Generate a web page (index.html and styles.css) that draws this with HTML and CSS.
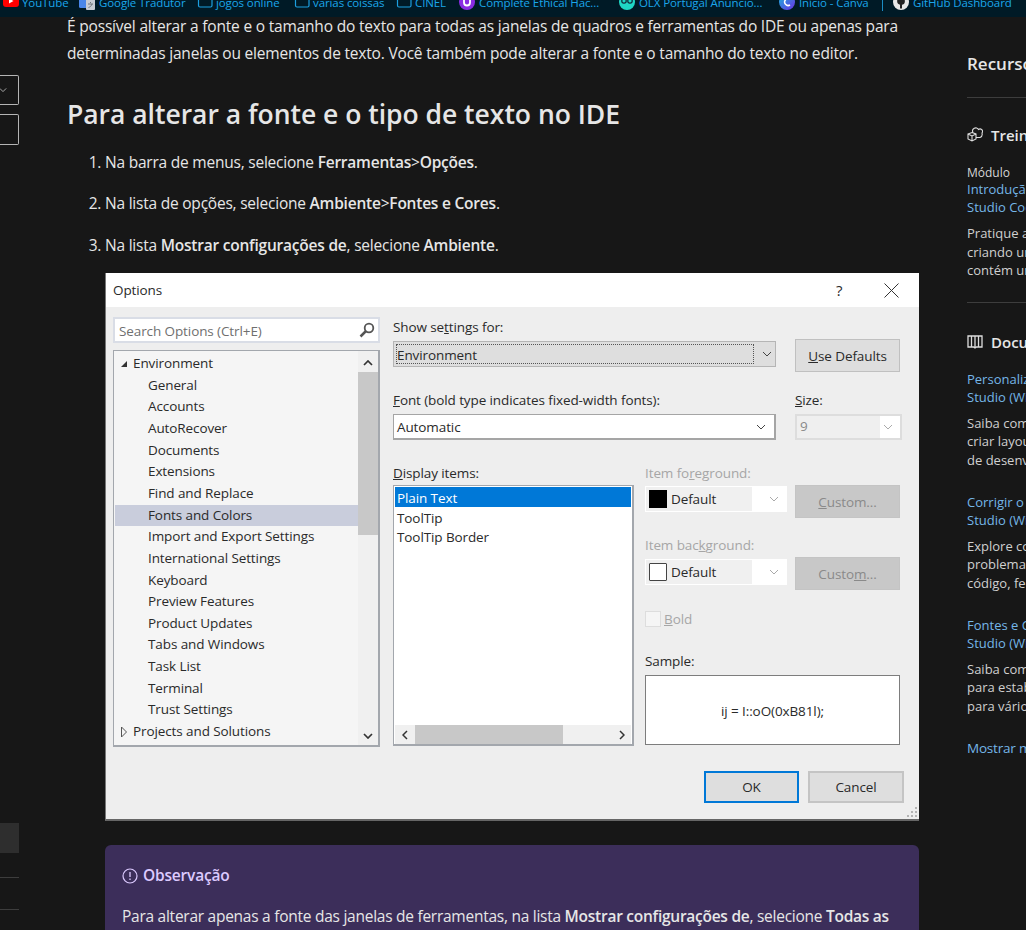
FILE: index.html
```html
<!DOCTYPE html>
<html lang="pt">
<head>
<meta charset="utf-8">
<title>Fontes e Cores</title>
<link rel="stylesheet" href="styles.css">
</head>
<body>
<svg class="defs" width="0" height="0" aria-hidden="true">
  <symbol id="chev" viewBox="0 0 10 6"><path d="M1 1l4 4 4-4" fill="none" stroke="currentColor" stroke-width="1"/></symbol>
  <symbol id="folder" viewBox="0 0 16 16"><path d="M1.500 4a1.500 1.500 0 0 1 1.500-1.500h3l1.500 1.500h6a1.500 1.500 0 0 1 1.500 1.500v6a1.500 1.500 0 0 1-1.500 1.500H3a1.500 1.500 0 0 1-1.500-1.500z" fill="none" stroke="#1b9fe0" stroke-width="1.200"/></symbol>
</svg>

<nav class="bookmarks">
  <a class="bm bm-yt"><svg class="fav" viewBox="0 0 16 16"><rect x="0" y="1" width="16" height="12" rx="3" fill="#f00"/><path d="M6 4.500v5l4.500-2.500z" fill="#fff"/></svg>YouTube</a>
  <a class="bm bm-gt"><svg class="fav" viewBox="0 0 16 16"><rect x="0" y="2" width="11" height="12" rx="1.500" fill="#4a86e8"/><rect x="7" y="5" width="9" height="11" rx="1" fill="#c9ccd2"/><path d="M9 10h5M11.500 8v1M13 10c-.5 2-2 3-3.500 3.500" stroke="#70757a" fill="none"/></svg>Google Tradutor</a>
  <a class="bm bm-f1"><svg class="fav"><use href="#folder"/></svg>jogos online</a>
  <a class="bm bm-f2"><svg class="fav"><use href="#folder"/></svg>varias coissas</a>
  <a class="bm bm-f3"><svg class="fav"><use href="#folder"/></svg>CINEL</a>
  <a class="bm bm-ud"><svg class="fav" viewBox="0 0 16 16"><circle cx="8" cy="8" r="8" fill="#8a2be2"/><path d="M5 4.500v4a3 3 0 0 0 6 0v-4" fill="none" stroke="#fff" stroke-width="1.800"/></svg>Complete Ethical Hac...</a>
  <a class="bm bm-ol"><svg class="fav" viewBox="0 0 16 16"><circle cx="8" cy="8" r="8" fill="#1fd6c4"/><circle cx="5" cy="7" r="2.200" fill="none" stroke="#123" stroke-width="1.200"/><circle cx="11" cy="7" r="2.200" fill="none" stroke="#123" stroke-width="1.200"/></svg>OLX Portugal Anuncio...</a>
  <a class="bm bm-ca"><svg class="fav" viewBox="0 0 16 16"><defs><linearGradient id="cg" x1="0" y1="0" x2="1" y2="1"><stop offset="0" stop-color="#18b7d8"/><stop offset="1" stop-color="#6d2ee8"/></linearGradient></defs><circle cx="8" cy="8" r="8" fill="url(#cg)"/><path d="M11 5a3.500 3.500 0 1 0 0 6" fill="none" stroke="#fff" stroke-width="1.500"/></svg>Início - Canva</a>
  <span class="bm-sep"></span>
  <a class="bm bm-gh"><svg class="fav" viewBox="0 0 16 16"><circle cx="8" cy="8" r="8" fill="#e8e8e8"/><path d="M4.500 3.500l2 1h3l2-1 .3 3c.5 3-1.500 4-2.800 4.200v3.800H7v-3.800C5.500 10.500 3.800 9.500 4.200 6.500z" fill="#222"/></svg>GitHub Dashboard</a>
</nav>

<div class="page">
  <aside class="leftnav">
    <div class="select-stub"><svg class="stub-chev"><use href="#chev"/></svg></div>
    <div class="input-stub"></div>
    <div class="active-stub"></div>
    <div class="rule-a"></div>
    <div class="rule-b"></div>
  </aside>

  <main class="article">
    <p class="intro">É possível alterar a fonte e o tamanho do texto para todas as janelas de quadros e ferramentas do IDE ou apenas para determinadas janelas ou elementos de texto. Você também pode alterar a fonte e o tamanho do texto no editor.</p>
    <h2 class="heading">Para alterar a fonte e o tipo de texto no IDE</h2>
    <ol class="steps">
      <li>Na barra de menus, selecione <b>Ferramentas</b>&gt;<b>Opções</b>.</li>
      <li>Na lista de opções, selecione <b>Ambiente</b>&gt;<b>Fontes e Cores</b>.</li>
      <li>Na lista <b>Mostrar configurações de</b>, selecione <b>Ambiente</b>.</li>
    </ol>

    <section class="dialog">
      <header class="dlg-title">
        <span class="dlg-name">Options</span>
        <span class="dlg-help">?</span>
        <svg class="dlg-close" viewBox="0 0 15 15"><path d="M.5.500l14 14M14.500.500l-14 14" stroke="#333" fill="none"/></svg>
      </header>
      <div class="dlg-body">
        <div class="dlg-left">
          <div class="search">
            <span class="search-ph">Search Options (Ctrl+E)</span>
            <svg class="search-ico" viewBox="0 0 16 16"><circle cx="10" cy="6" r="4.300" fill="none" stroke="#555" stroke-width="1.800"/><path d="M7 9l-5.500 5.500" stroke="#555" stroke-width="2.500"/></svg>
          </div>
          <div class="tree">
            <ul class="tree-list">
              <li class="node"><svg class="tri" viewBox="0 0 8 12"><path d="M7 3v6H1z" fill="#333"/></svg>Environment</li>
              <li>General</li>
              <li>Accounts</li>
              <li>AutoRecover</li>
              <li>Documents</li>
              <li>Extensions</li>
              <li>Find and Replace</li>
              <li class="sel">Fonts and Colors</li>
              <li>Import and Export Settings</li>
              <li>International Settings</li>
              <li>Keyboard</li>
              <li>Preview Features</li>
              <li>Product Updates</li>
              <li>Tabs and Windows</li>
              <li>Task List</li>
              <li>Terminal</li>
              <li>Trust Settings</li>
              <li class="node"><svg class="tri" viewBox="0 0 8 12"><path d="M1.500 1l5 5-5 5z" fill="none" stroke="#555"/></svg>Projects and Solutions</li>
            </ul>
            <div class="vscroll">
              <svg class="arrow-v" viewBox="0 0 10 6"><path d="M1 5l4-4 4 4" fill="none" stroke="#333" stroke-width="1.700"/></svg>
              <div class="vthumb"></div>
              <svg class="arrow-v arrow-down" viewBox="0 0 10 6"><path d="M1 1l4 4 4-4" fill="none" stroke="#333" stroke-width="1.700"/></svg>
            </div>
          </div>
        </div>

        <div class="dlg-right">
          <div class="row-show">
            <div class="col-main">
              <label class="lbl">Show se<u>t</u>tings for:</label>
              <div class="combo combo-env"><span class="focus-box">Environment</span><svg class="chev"><use href="#chev"/></svg></div>
            </div>
            <button class="btn btn-defaults"><u>U</u>se Defaults</button>
          </div>
          <div class="row-font">
            <div class="col-main">
              <label class="lbl"><u>F</u>ont (bold type indicates fixed-width fonts):</label>
              <div class="combo combo-font"><span class="combo-text">Automatic</span><svg class="chev"><use href="#chev"/></svg></div>
            </div>
            <div class="col-size">
              <label class="lbl"><u>S</u>ize:</label>
              <div class="combo combo-size"><span class="size-val">9</span><svg class="chev"><use href="#chev"/></svg></div>
            </div>
          </div>
          <div class="row-items">
            <div class="col-list">
              <label class="lbl"><u>D</u>isplay items:</label>
              <div class="listbox">
                <ul class="items">
                  <li class="item-sel">Plain Text</li>
                  <li>ToolTip</li>
                  <li>ToolTip Border</li>
                </ul>
                <div class="hscroll">
                  <svg class="arrow-h" viewBox="0 0 6 10"><path d="M5 1L1 5l4 4" fill="none" stroke="#333" stroke-width="1.500"/></svg>
                  <div class="hthumb"></div>
                  <svg class="arrow-h arrow-r" viewBox="0 0 6 10"><path d="M1 1l4 4-4 4" fill="none" stroke="#333" stroke-width="1.500"/></svg>
                </div>
              </div>
            </div>
            <div class="col-opts">
              <div class="opt-row">
                <div class="opt-col">
                  <label class="lbl lbl-off">Item fo<u>r</u>eground:</label>
                  <div class="color-combo"><span class="swatch swatch-black"></span><span class="color-name">Default</span><svg class="chev"><use href="#chev"/></svg></div>
                </div>
                <button class="btn btn-custom"><u>C</u>ustom...</button>
              </div>
              <div class="opt-row opt-row-bg">
                <div class="opt-col">
                  <label class="lbl lbl-off">Item bac<u>k</u>ground:</label>
                  <div class="color-combo color-combo-bg"><span class="swatch swatch-white"></span><span class="color-name">Default</span><svg class="chev"><use href="#chev"/></svg></div>
                </div>
                <button class="btn btn-custom">Custo<u>m</u>...</button>
              </div>
              <div class="bold-row"><span class="check"></span><span class="lbl-off"><u>B</u>old</span></div>
              <label class="lbl lbl-sample">Sample:</label>
              <div class="sample">ij = I::oO(0xB81l);</div>
            </div>
          </div>
          <div class="row-actions">
            <button class="btn btn-ok">OK</button>
            <button class="btn btn-cancel">Cancel</button>
          </div>
        </div>
      </div>
      <svg class="grip" viewBox="0 0 12 12"><path d="M10 1h2v2h-2zM10 5h2v2h-2zM6 5h2v2H6zM10 9h2v2h-2zM6 9h2v2H6zM2 9h2v2H2z" fill="#b4b4b4"/></svg>
    </section>

    <aside class="note">
      <p class="note-title"><svg class="note-ico" viewBox="0 0 16 16"><circle cx="8" cy="8" r="7" fill="none" stroke="currentColor" stroke-width="1.200"/><path d="M8 4v5M8 10.500v1.500" stroke="currentColor" stroke-width="1.300"/></svg>Observação</p>
      <p class="note-text">Para alterar apenas a fonte das janelas de ferramentas, na lista <b>Mostrar configurações de</b>, selecione <b>Todas as</b></p>
    </aside>
  </main>

  <aside class="side">
    <h2 class="side-title">Recursos</h2>
    <section class="side-sec">
      <h3 class="side-head"><svg class="side-ico" viewBox="0 0 16 16"><path d="M1 7l4-1.500L9 7v5l-4 2-4-2zM1 7l4 2 4-2M5 9v5M6 5.500a3 3 0 0 1 5.500-3 2.500 2.500 0 0 1 3.500 3.500c.5 2-.5 4-2 4.500H9" fill="none" stroke="#ddd" stroke-width="1.100"/></svg>Treinamento</h3>
      <p class="side-kind">Módulo</p>
      <a class="side-link">Introdução<br>Studio Code</a>
      <p class="side-desc">Pratique a<br>criando um<br>contém um</p>
    </section>
    <section class="side-sec side-docs">
      <h3 class="side-head"><svg class="side-ico" viewBox="0 0 16 16"><path d="M1 2h14v11H9.500L8 14l-1.500-1H1zM4.500 2v11M8 2v12M11.500 2v11" fill="none" stroke="#ddd" stroke-width="1.300"/></svg>Documentação</h3>
      <a class="side-link side-link-first">Personalizar<br>Studio (Windows)</a>
      <p class="side-desc">Saiba como<br>criar layouts<br>de desenvolvimento</p>
      <a class="side-link side-link-next">Corrigir o<br>Studio (Windows)</a>
      <p class="side-desc">Explore como<br>problemas<br>código, fe</p>
      <a class="side-link side-link-next">Fontes e Cores<br>Studio (Windows)</a>
      <p class="side-desc">Saiba como<br>para estabelecer<br>para vários</p>
      <a class="side-link side-link-next side-more">Mostrar mais</a>
    </section>
  </aside>
</div>
</body>
</html>
```

FILE: styles.css
```css
* { box-sizing: border-box; }
html, body { margin: 0; padding: 0; height: 930px; overflow: hidden; }
body { width: 1026px; background: #171717; color: #e6e6e6; font-family: "Open Sans", "Noto Sans", sans-serif; font-size: 15.5px; position: relative; }
p, h2, h3, ul, ol { margin: 0; padding: 0; }
ul { list-style: none; }
.defs { position: absolute; }

/* Bookmark bar */
.bookmarks { height: 17px; background: #001a26; display: flex; align-items: flex-end; padding: 0 0 6px 0; overflow: hidden; position: relative; z-index: 2; white-space: nowrap; }
.bm { display: flex; align-items: center; flex: none; height: 16px; font-size: 11.500px; letter-spacing: -0.1px; color: #1ba6ea; line-height: 16px; }
.fav { width: 16px; height: 16px; flex: none; margin: 0 4px 2px 0; }
.bm-yt { margin-left: 3px; width: 76px; }
.bm-yt .fav { margin-right: 3px; }
.bm-gt { width: 118px; }
.bm-f1 { width: 97px; }
.bm-f1 .fav, .bm-f2 .fav, .bm-f3 .fav { margin-right: 3px; }
.bm-f2 { width: 102px; }
.bm-f3 { width: 63px; }
.bm-ud { width: 160px; }
.bm-ol { width: 160px; }
.bm-ca { width: 103px; }
.bm-sep { width: 1px; height: 16px; background: #1b8cc4; flex: none; margin: 0 10px 0 0; }
.bm-gh { flex: none; }

/* Page */
.page { display: flex; align-items: flex-start; margin-top: -4px; }
.leftnav { flex: none; width: 19px; margin-right: 48px; padding-top: 62px; }
.select-stub { height: 30px; border: 1px solid #b5b5b5; border-left: 0; border-radius: 0 2px 2px 0; display: flex; align-items: center; }
.stub-chev { width: 8px; height: 6px; color: #ccc; margin-left: -1px; }
.input-stub { height: 31px; margin-top: 9px; border: 1px solid #b5b5b5; border-left: 0; border-radius: 0 2px 2px 0; }
.active-stub { height: 30px; margin-top: 678px; background: #2e2e2e; }
.rule-a { height: 1px; margin-top: 24px; background: #3d3d3d; }
.rule-b { height: 1px; margin-top: 31px; background: #3d3d3d; }

.article { flex: none; width: 852px; margin-right: 48px; letter-spacing: -0.19px; }
.intro { line-height: 27px; }
.heading { margin-top: 29px; font-size: 26.500px; font-weight: 600; line-height: 36px; color: #e6e6e6; letter-spacing: -0.02px; }
.steps { margin: 16.600px 0 0 38px; letter-spacing: -0.22px; }
.steps li { line-height: 27px; margin-bottom: 14.500px; }
.steps b { font-weight: 600; }

/* Dialog */
.dialog { margin: 0 0 0 38px; width: 814px; height: 548px; background: #eeeeee; color: #2a2a2a; position: relative; border-left: 1px solid #777; border-bottom: 2px solid #666; font-size: 13.500px; line-height: 18px; letter-spacing: -0.1px; }
.dlg-title { height: 34px; background: #fff; display: flex; align-items: center; padding-left: 7px; }
.dlg-name { flex: 1; font-size: 13.500px; }
.dlg-help { width: 48px; font-size: 15px; }
.dlg-close { width: 15px; height: 15px; margin-right: 20px; }
.dlg-body { display: flex; padding: 10px 0 0 7px; }
.dlg-left { flex: none; width: 267px; margin-right: 13px; }
.search { height: 26px; background: #fff; border: 2px solid #d9dde6; display: flex; align-items: center; justify-content: space-between; padding: 2px 3px 0 4px; color: #6f6f6f; }
.search-ico { width: 16px; height: 16px; margin-top: -2px; }
.tree { margin-top: 7px; height: 397px; background: #f5f5f5; border: 1px solid #a3a7ad; border-width: 1px 2px 2px 1px; display: flex; }
.tree-list { flex: 1; padding: 2px 0 0 1px; }
.tree-list li { height: 21.650px; line-height: 21.650px; padding-left: 33px; white-space: nowrap; }
.tree-list .node { padding-left: 0; display: flex; align-items: center; }
.tree-list .sel { background: #c9cddc; }
.tri { width: 8px; height: 12px; margin: 0 5px 0 5px; flex: none; }
.vscroll { width: 20px; flex: none; background: #f0f0f0; display: flex; flex-direction: column; align-items: center; }
.vthumb { width: 100%; height: 163px; background: #c8c8c8; margin-top: 6px; flex: none; }
.arrow-v { width: 10px; height: 6px; flex: none; margin-top: 9px; }
.arrow-down { margin-top: auto; margin-bottom: 6px; }
.dlg-right { flex: none; width: 511px; display: flex; flex-direction: column; padding-top: 1px; }
.lbl { display: block; white-space: nowrap; line-height: 18px; }
.row-show { display: flex; align-items: flex-start; height: 73px; }
.col-main { width: 383px; flex: none; margin-right: 19px; }
.combo { display: flex; align-items: center; height: 26px; margin-top: 5px; }
.chev { width: 10px; height: 6px; flex: none; color: #444; }
.combo-env { background: #dedede; border: 1px solid #b5b5b5; padding: 2px; }
.focus-box { flex: 1; height: 100%; border: 1px dotted #555; line-height: 20px; padding-left: 0; }
.combo-env .chev { margin: 0 1px 0 8px; }
.btn { font: inherit; color: inherit; background: #dedede; border: 1px solid #c0c0c0; padding: 0; letter-spacing: inherit; }
.btn-defaults { width: 105px; height: 33px; margin-top: 21px; }
.row-font { display: flex; height: 73px; }
.combo-font { background: #fff; border: 2px solid #a5a5a5; border-width: 1px 2px 2px 1px; padding: 0 8px 0 3px; justify-content: space-between; }
.col-size { width: 107px; flex: none; }
.combo-size { border: 2px solid #ddd; background: #fff; justify-content: space-between; padding-right: 7px; }
.combo-size .chev { color: #aaa; }
.size-val { flex: none; width: 83px; background: #efefef; color: #8a8a8a; height: 100%; line-height: 20px; padding-left: 3px; }
.row-items { display: flex; }
.col-list { width: 241px; flex: none; margin-right: 11px; }
.listbox { margin-top: 3px; height: 261px; background: #fff; border: 1px solid #a3a7ad; border-width: 1px 2px 2px 1px; padding: 1px 1px 0; display: flex; flex-direction: column; }
.items { flex: 1; }
.items li { height: 19.500px; line-height: 22.500px; padding-left: 2px; white-space: nowrap; }
.item-sel { background: #0078d7; color: #fff; }
.hscroll { height: 19px; background: #f0f0f0; display: flex; align-items: center; }
.arrow-h { width: 6px; height: 10px; margin-left: 7px; flex: none; }
.hthumb { width: 148px; height: 100%; background: #c8c8c8; margin-left: 7px; }
.arrow-r { margin-left: 56px; }
.col-opts { width: 258px; flex: none; }
.opt-row { display: flex; align-items: flex-start; }
.opt-row-bg { margin-top: 18px; }
.opt-col { width: 142px; margin-right: 8px; flex: none; }
.lbl-off { color: #a6a6a6; }
.color-combo { margin-top: 4px; height: 26px; border: 1px solid #fff; background: linear-gradient(to right, #f0f0f0 106px, #fff 106px); display: flex; align-items: center; color: #2a2a2a; }
.color-combo-bg { margin-top: 5px; }
.swatch { width: 18px; height: 18px; margin-left: 3px; flex: none; }
.swatch-black { background: #000; }
.swatch-white { background: #fff; border: 1px solid #444; border-radius: 1px; }
.color-name { margin-left: 4px; flex: 1; }
.color-combo .chev { color: #aaa; margin-right: 7px; }
.btn-custom { width: 105px; height: 33px; margin-top: 21px; background: #c8c8c8; border-color: #c4c4c4; color: #8a8a8a; }
.bold-row { display: flex; align-items: center; margin-top: 20px; height: 18px; }
.check { width: 16px; height: 16px; background: #f5f5f5; border: 1px solid #ddd; margin-right: 3px; flex: none; }
.lbl-sample { margin-top: 24px; }
.sample { margin-top: 5px; width: 255px; height: 70px; background: #fff; border: 1px solid #7d7d7d; display: flex; align-items: center; justify-content: center; padding-top: 2px; }
.row-actions { display: flex; margin: 25px 0 0 311px; }
.btn-ok { width: 95px; height: 32px; border: 2px solid #0078d7; margin-right: 9px; }
.btn-cancel { width: 96px; height: 32px; border: 2px solid #c4c4c4; }
.grip { position: absolute; right: 2px; bottom: 1px; width: 12px; height: 12px; }

/* Note */
.note { margin: 24px 0 0 38px; width: 814px; height: 120px; background: #3c2e5a; border-radius: 6px; padding: 17px 17px 0; }
.note-title { line-height: 27px; font-weight: 600; color: #dccaff; display: flex; align-items: center; }
.note-ico { width: 16px; height: 16px; margin-right: 5px; }
.note-text { margin-top: 14px; line-height: 27px; white-space: nowrap; letter-spacing: -0.26px; }
.note-text b { font-weight: 600; }

/* Right rail */
.side { flex: none; width: 200px; padding-top: 37px; white-space: nowrap; font-size: 13px; }
.side-title { font-size: 17px; font-weight: 600; line-height: 28px; padding-bottom: 19px; border-bottom: 1px solid #3d3d3d; }
.side-sec { padding-top: 26px; padding-bottom: 22px; border-bottom: 1px solid #3d3d3d; }
.side-docs { padding-top: 28px; border-bottom: 0; }
.side-head { display: flex; align-items: center; font-size: 15px; font-weight: 600; line-height: 22px; }
.side-ico { width: 16px; height: 16px; margin-right: 8px; flex: none; }
.side-kind { margin-top: 19px; font-size: 12px; line-height: 15px; color: #d6d6d6; }
.side-link { display: block; color: #75b6e7; line-height: 18px; }
.side-desc { margin-top: 8px; line-height: 18.500px; color: #d0d0d0; }
.side-link-first { margin-top: 17px; }
.side-link-next { margin-top: 23.500px; }
.side-more { font-size: 13.500px; font-weight: 500; letter-spacing: -0.2px; }
```
